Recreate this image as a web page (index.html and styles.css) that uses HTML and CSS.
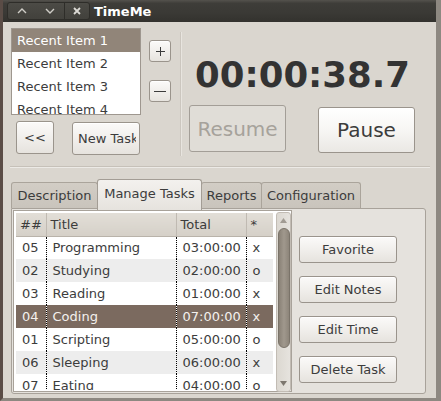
FILE: index.html
```html
<!DOCTYPE html>
<html>
<head>
<meta charset="utf-8">
<link rel="stylesheet" href="styles.css">
</head>
<body>
<div class="window">
  <div class="titlebar">
    <div class="wbtns">
      <span class="wb wb-up"><svg width="10" height="6" viewBox="0 0 10 6"><path d="M1 5 L5 1 L9 5" fill="none" stroke="#cfcdc7" stroke-width="1.4"/></svg></span>
      <span class="wb wb-down"><svg width="10" height="6" viewBox="0 0 10 6"><path d="M1 1 L5 5 L9 1" fill="none" stroke="#cfcdc7" stroke-width="1.4"/></svg></span>
      <span class="wb wb-close"><svg width="8" height="8" viewBox="0 0 8 8"><path d="M1 1 L7 7 M7 1 L1 7" fill="none" stroke="#dcdad5" stroke-width="1.8"/></svg></span>
    </div>
    <div class="wtitle">TimeMe</div>
  </div>
  <div class="content">
    <div class="top">
      <div class="left">
        <div class="row1">
          <ul class="recent">
            <li class="sel">Recent Item 1</li>
            <li>Recent Item 2</li>
            <li>Recent Item 3</li>
            <li>Recent Item 4</li>
          </ul>
          <div class="pm">
            <button class="btn sq plus"><svg width="11" height="11" viewBox="0 0 11 11"><path d="M5.5 1 V10 M1 5.5 H10" stroke="#3c3c3c" stroke-width="1"/></svg></button>
            <button class="btn sq minus"><svg width="12" height="3" viewBox="0 0 12 3"><path d="M0 1.5 H12" stroke="#3c3c3c" stroke-width="1"/></svg></button>
          </div>
        </div>
        <div class="row2">
          <button class="btn back">&lt;&lt;</button>
          <button class="btn newtask"><span>New Task</span></button>
        </div>
      </div>
      <div class="vsep"></div>
      <div class="right">
        <div class="clock">00:00:38.7</div>
        <div class="ctrls">
          <button class="btn big disabled">Resume</button>
          <button class="btn big pause">Pause</button>
        </div>
      </div>
    </div>
    <div class="hsep"></div>
    <div class="notebook">
      <div class="tabs">
        <div class="tab t1">Description</div>
        <div class="tab t2 active">Manage Tasks</div>
        <div class="tab t3">Reports</div>
        <div class="tab t4">Configuration</div>
      </div>
      <div class="panel">
        <div class="tree">
          <div class="list">
            <table>
              <thead>
                <tr><th class="c1">##</th><th class="c2">Title</th><th class="c3">Total</th><th class="c4">*</th></tr>
              </thead>
              <tbody>
                <tr><td class="c1">05</td><td class="c2">Programming</td><td class="c3">03:00:00</td><td class="c4">x</td></tr>
                <tr class="alt"><td class="c1">02</td><td class="c2">Studying</td><td class="c3">02:00:00</td><td class="c4">o</td></tr>
                <tr><td class="c1">03</td><td class="c2">Reading</td><td class="c3">01:00:00</td><td class="c4">x</td></tr>
                <tr class="sel"><td class="c1">04</td><td class="c2">Coding</td><td class="c3">07:00:00</td><td class="c4">x</td></tr>
                <tr><td class="c1">01</td><td class="c2">Scripting</td><td class="c3">05:00:00</td><td class="c4">o</td></tr>
                <tr class="alt"><td class="c1">06</td><td class="c2">Sleeping</td><td class="c3">06:00:00</td><td class="c4">x</td></tr>
                <tr><td class="c1">07</td><td class="c2">Eating</td><td class="c3">04:00:00</td><td class="c4">o</td></tr>
              </tbody>
            </table>
          </div>
          <div class="scrollbar">
            <svg class="arr up" width="7" height="5" viewBox="0 0 7 5"><path d="M0 5 L3.5 0 L7 5 Z" fill="#a19b93"/></svg>
            <div class="thumb"></div>
            <svg class="arr down" width="7" height="5" viewBox="0 0 7 5"><path d="M0 0 L3.5 5 L7 0 Z" fill="#7d776f"/></svg>
          </div>
        </div>
        <div class="actions">
          <button class="btn act">Favorite</button>
          <button class="btn act">Edit Notes</button>
          <button class="btn act">Edit Time</button>
          <button class="btn act">Delete Task</button>
        </div>
      </div>
    </div>
  </div>
</div>
</body>
</html>
```

FILE: styles.css
```css
* { box-sizing: border-box; margin: 0; padding: 0; }
html, body { width: 441px; height: 401px; overflow: hidden; }
body {
  font-family: "DejaVu Sans", sans-serif;
  font-size: 13px;
  color: #3c3c3c;
  background: #8d8881;
}
.window {
  width: 441px;
  height: 401px;
  display: flex;
  flex-direction: column;
  border-left: 3px solid #5a4c46;
  border-right: 5px solid #8d8881;
  border-bottom: 3px solid #8d8881;
  background: #dad6cf;
}
.titlebar {
  height: 22px;
  flex: none;
  display: flex;
  align-items: center;
  padding-left: 4px;
  background: linear-gradient(#54524d, #3e3d39 15%, #3a3935 60%, #33322e);
}
.wbtns {
  display: flex;
  height: 18px;
  border: 1px solid #2e2d29;
  border-radius: 3px;
  background: linear-gradient(#4c4b46, #42413c);
}
.wb { display: flex; align-items: center; justify-content: center; width: 28px; }
.wb-close { width: 25px; border-left: 1px solid #2e2d29; }
.wtitle { margin-left: 4px; color: #fff; font-weight: bold; font-size: 13px; }

.content { flex: 1; display: flex; flex-direction: column; }
.top { display: flex; height: 144px; padding: 6px 0 0 8px; flex: none; }
.left { width: 162px; }
.row1 { display: flex; }
.recent {
  list-style: none;
  width: 130px;
  height: 87px;
  border: 1px solid #9e978f;
  background: #fff;
  overflow: hidden;
}
.recent li { height: 23px; line-height: 23px; padding-left: 5px; white-space: nowrap; }
.recent li.sel { background: #918579; color: #fff; }
.pm { display: flex; flex-direction: column; margin-left: 8px; }
.btn {
  font-family: inherit;
  font-size: 13px;
  color: #3c3c3c;
  background: linear-gradient(#fbfaf9, #f1efec 50%, #e6e3de);
  border: 1px solid #9a948c;
  border-radius: 3px;
  box-shadow: inset 0 1px #fff;
  display: flex;
  align-items: center;
  justify-content: center;
}
.sq { width: 22px; height: 22px; }
.plus { margin-top: 12px; }
.minus { margin-top: 18px; }
.row2 { display: flex; margin-top: 6px; }
.back { width: 38px; height: 33px; margin-left: 5px; font-size: 13px; }
.newtask {
  width: 68px; height: 33px; margin-left: 18px; margin-top: 1px;
  justify-content: flex-start; overflow: hidden; padding: 0 3px 0 5px;
}
.newtask span { display: block; overflow: hidden; white-space: nowrap; width: 59px; }
.vsep {
  width: 2px; height: 124px; margin: 4px 0 0 7px;
  background: linear-gradient(90deg, #c8c3bb 50%, #ebe8e3 50%);
  opacity: .8;
}
.right { width: 226px; margin-left: 7px; }
.clock {
  margin-top: 27px;
  height: 40px;
  line-height: 40px;
  font-size: 35.5px;
  font-weight: bold;
  color: #333;
  text-align: center;
  padding-left: 1px;
  white-space: nowrap;
}
.ctrls { display: flex; gap: 32px; margin-top: 10px; align-items: flex-start; }
.big { width: 97px; height: 47px; font-size: 20px; }
.pause { margin-top: 2px; height: 46px; background: linear-gradient(#ffffff, #f7f6f4 50%, #eae8e4); }
.disabled {
  background: #e0ddd7;
  color: #a6a29b;
  border-color: #a39e97;
  box-shadow: none;
}
.hsep {
  height: 2px;
  margin: 0 6px 0 7px;
  border-top: 1px solid #c6c1b9;
  border-bottom: 1px solid #eceae6;
  flex: none;
}
.notebook { margin: 11px 0 0 8px; width: 415px; }
.tabs { display: flex; height: 29px; align-items: flex-end; position: relative; z-index: 1; }
.tab {
  height: 26px;
  line-height: 25px;
  text-align: center;
  background: linear-gradient(#d2cdc5, #c9c4bc);
  border: 1px solid #aaa49b;
  border-bottom: none;
  border-radius: 3px 3px 0 0;
  margin-right: -1px;
}
.t1 { width: 87px; }
.t2 { width: 105px; }
.t3 { width: 61px; }
.t4 { width: 100px; }
.tab.active {
  height: 31px;
  line-height: 27px;
  margin-bottom: -2px;
  background: linear-gradient(#f3f1ee, #e6e3de);
  border-color: #a39d95;
  position: relative;
  z-index: 2;
}
.panel {
  height: 186px;
  border: 1px solid #a8a29a;
  border-radius: 0 3px 3px 3px;
  background: #e5e2dd;
  display: flex;
  padding: 1px 0 0 1px;
}
.tree {
  width: 279px;
  height: 182px;
  border: 1px solid #a8a29a;
  background: #fff;
  display: flex;
  padding: 2px 0 0 2px;
}
.list { width: 257px; height: 177px; overflow: hidden; }
table { border-collapse: collapse; table-layout: fixed; width: 257px; }
th, td { height: 23px; padding: 0; white-space: nowrap; overflow: hidden; text-align: left; font-weight: normal; }
.c1 { width: 30px; }
.c2 { width: 130px; }
.c3 { width: 70px; }
.c4 { width: 27px; }
th {
  background: linear-gradient(#e2ded7, #d5d0c8);
  border-right: 1px solid #c0bab2;
  border-bottom: 1px solid #b9b3aa;
  padding-left: 4px;
  color: #3c3c3c;
}
th.c4 { border-right: 1px solid #c0bab2; padding-left: 4px; }
td { padding-left: 6px; }
td.c1, td.c2, td.c3 { border-right: 1px dotted #000; }
td.c3 { padding-left: 6px; }
tr.alt td { background: #ededed; }
tr.sel td { background: #7b6a5f; color: #f4f1ee; }
.scrollbar {
  width: 15px;
  height: 180px;
  margin-left: 3px;
  margin-top: -1px;
  border: 1px solid #c2bcb4;
  border-radius: 3px;
  background: linear-gradient(90deg, #dcd8d1, #e6e3de);
  display: flex;
  flex-direction: column;
  align-items: center;
}
.arr { display: block; flex: none; }
.arr.up { margin-top: 5px; }
.thumb {
  width: 12px;
  height: 120px;
  margin-top: 5px;
  border-radius: 6px;
  border: 1px solid #7a7369;
  background: linear-gradient(90deg, #8a8277, #a0988d 50%, #8d857a);
}
.arr.down { margin-top: auto; margin-bottom: 5px; }
.actions { display: flex; flex-direction: column; gap: 13px; margin: 26px 0 0 7px; }
.act { width: 98px; height: 27px; }
```
